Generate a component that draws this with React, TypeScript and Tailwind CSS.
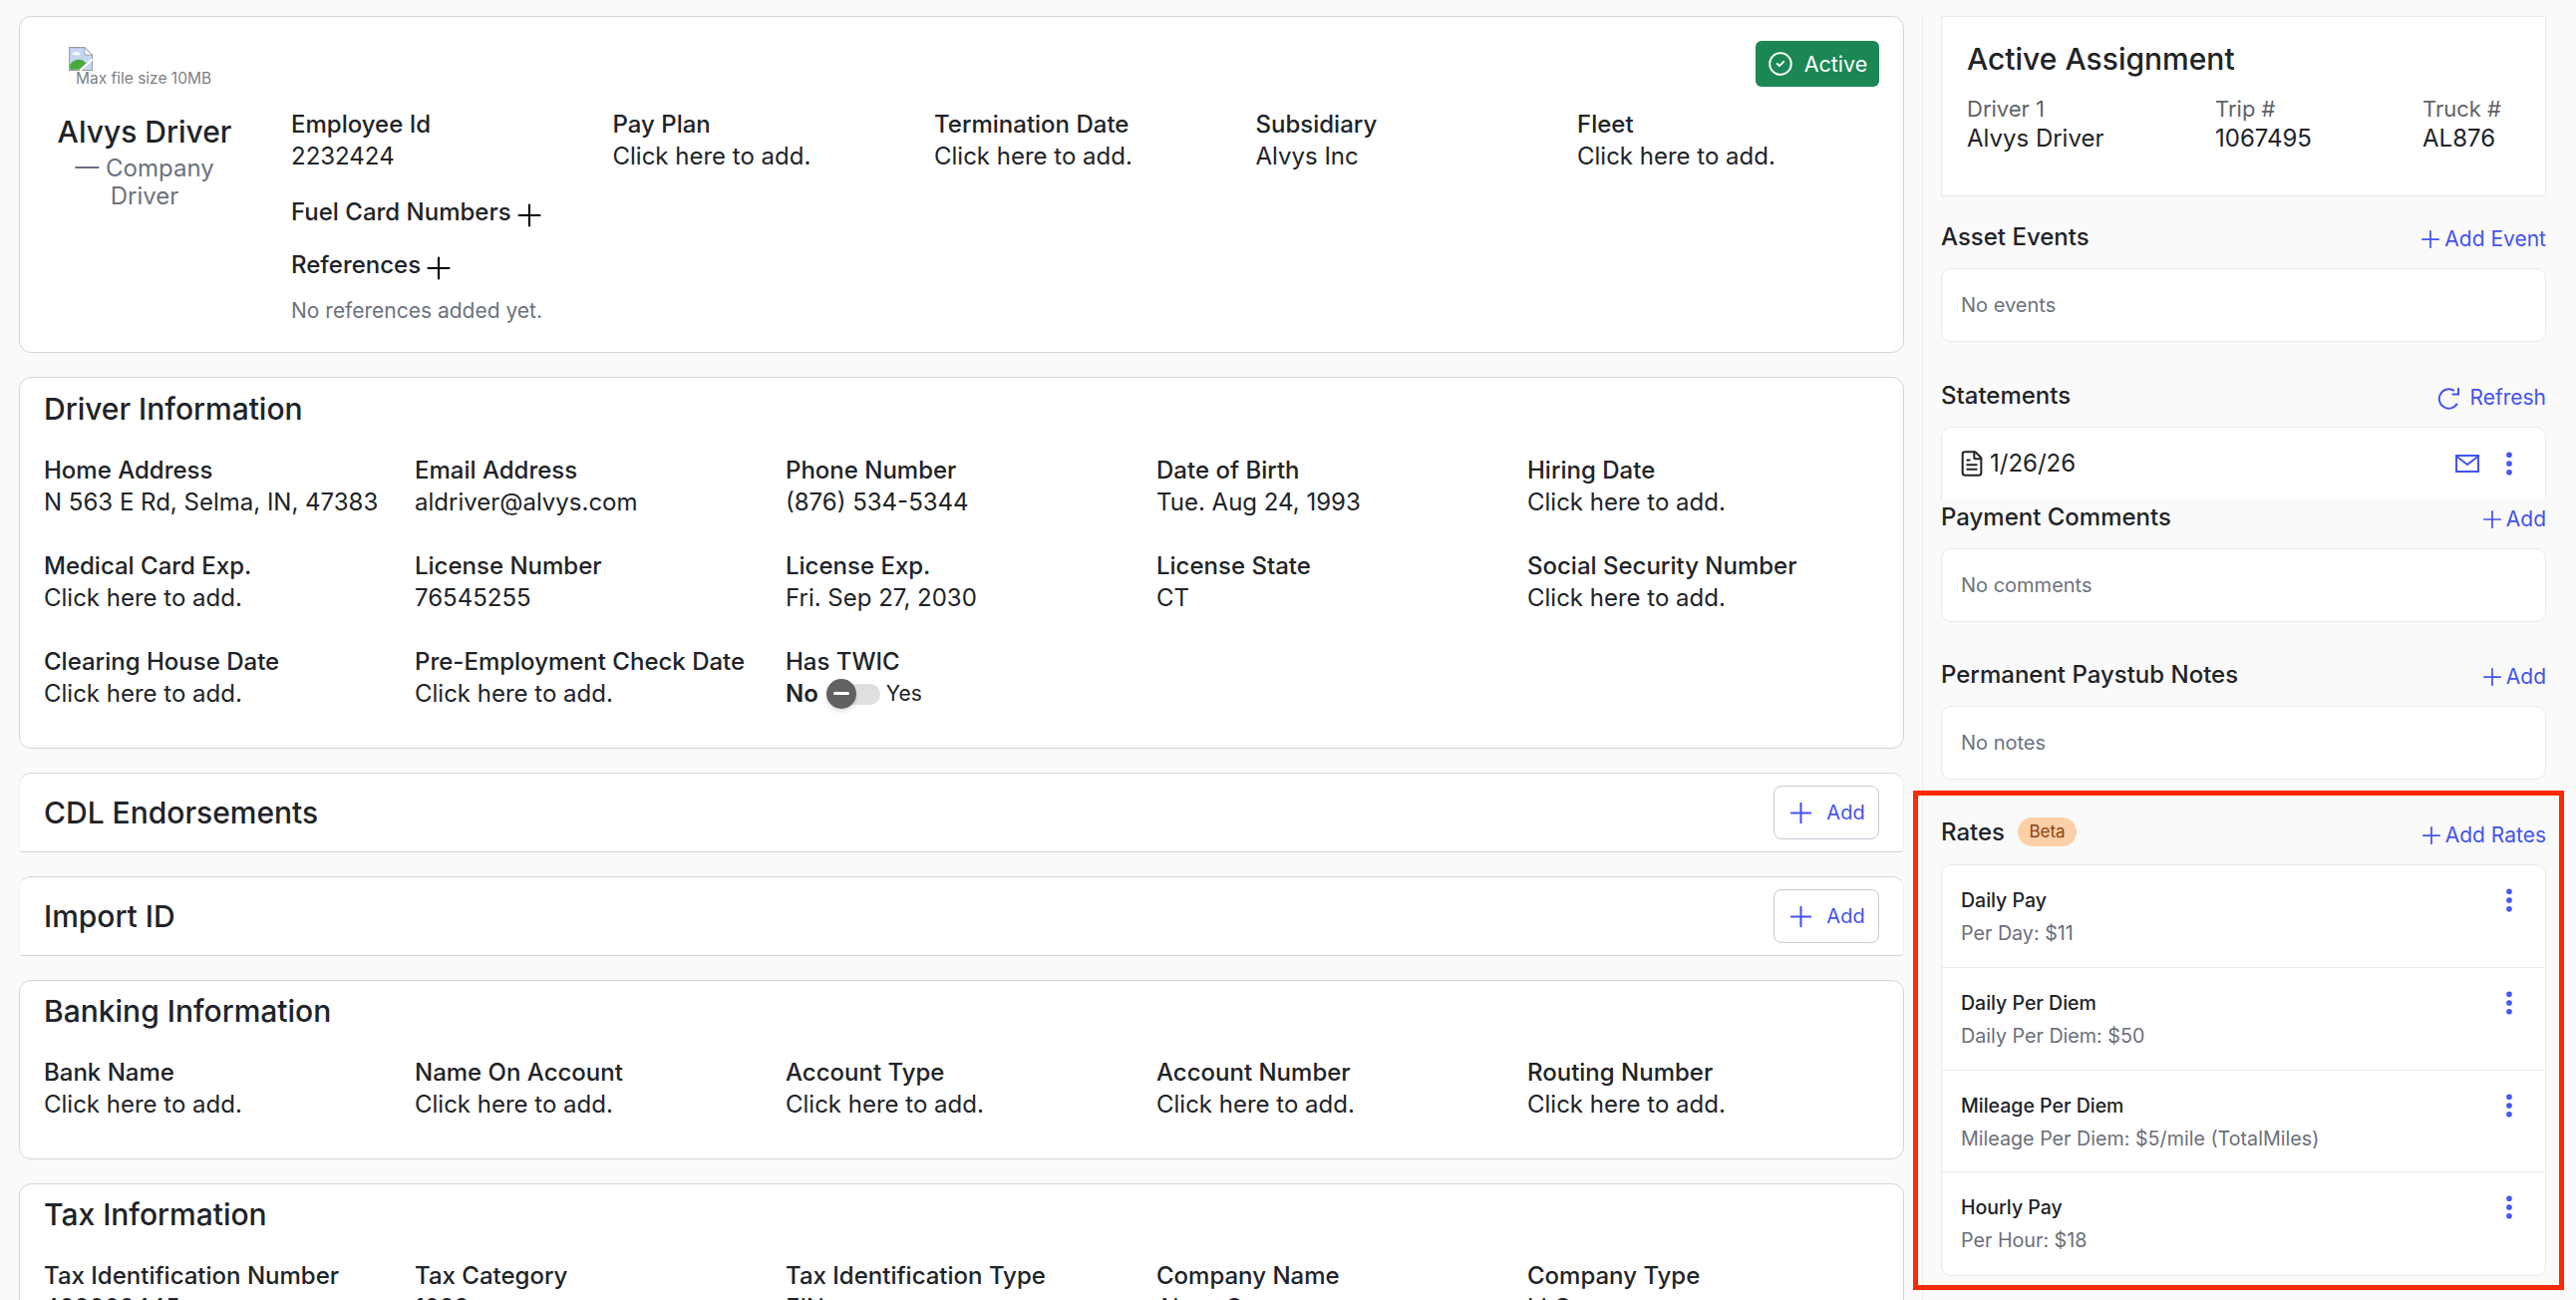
import { CircleCheck, EllipsisVertical, Plus, FileText } from "lucide-react";

const FONT = "font-['Inter','Noto_Sans',sans-serif]";

function Field({ label, value }: { label: string; value: string }) {
  return (
    <div className="text-[24px] leading-[32px] text-[#202327]">
      <div className="whitespace-nowrap font-[450]">{label}</div>
      <div className="whitespace-nowrap">{value}</div>
    </div>
  );
}

function BrokenImage() {
  return (
    <svg width="24" height="24" viewBox="0 0 16 16" className="shrink-0">
      <path d="M0.4 0.4h10.2l5 5v10.2H0.4z" fill="#c5d6f5" stroke="#9c9c9c" strokeWidth="0.7" />
      <path d="M10.6 0.4v5h5z" fill="#fff" stroke="#9c9c9c" strokeWidth="0.6" />
      <ellipse cx="5" cy="4.5" rx="2.4" ry="1" fill="#fff" />
      <path d="M0.8 15.2v-3.4c2.4-3 6-4.2 9-2.4l-5.6 5.8z" fill="#46a838" />
      <path d="M9.6 9.4c1 .6 1.6 1.2 2 1.8l-3.6 4H4.2z" fill="#46a838" />
      <path d="M7.5 15.8L15.8 8.2" stroke="#fff" strokeWidth="1.5" />
    </svg>
  );
}

function RefreshIcon() {
  return (
    <svg width="24" height="24" viewBox="0 0 24 24" fill="none" stroke="currentColor" strokeWidth="2" className="shrink-0">
      <path d="M19.9 17.85A9.7 9.7 0 1 1 17 5" />
      <path d="M21 2v6.5h-6.5" />
    </svg>
  );
}

function MailIcon() {
  return (
    <svg width="28" height="28" viewBox="0 0 28 28" fill="none" stroke="currentColor" strokeWidth="2" className="shrink-0">
      <path d="M3 6h22v16H3z" />
      <path d="M3.5 7L14 15l10.5-8" />
    </svg>
  );
}

function Toggle() {
  return (
    <div className="flex h-[32px] items-center">
      <span className="text-[24px] font-semibold text-[#202327]">No</span>
      <span className="relative ml-[8px] h-[21px] w-[54px] rounded-full bg-[#e0e0e0]">
        <span className="absolute left-0 top-[-5px] flex h-[30px] w-[30px] items-center justify-center rounded-full bg-[#616161] shadow-md">
          <span className="h-[3px] w-[16px] rounded-sm bg-white" />
        </span>
      </span>
      <span className="ml-[6px] text-[21px] text-[#202327]">Yes</span>
    </div>
  );
}

function AddButton() {
  return (
    <button
      type="button"
      className="flex h-[54px] w-[106px] items-center justify-center gap-[9px] rounded-[8px] border border-[#cacad8] bg-white text-[20px] text-[#4353ef]"
    >
      <Plus size={33} strokeWidth={1.5} className="-ml-[3px]" />
      Add
    </button>
  );
}

function PanelHead({ title, action }: { title: React.ReactNode; action: React.ReactNode }) {
  return (
    <div className="flex h-[46px] items-start justify-between text-[#202327]">
      <div className="text-[24px] font-[450] leading-[29px]">{title}</div>
      <div className="mt-[2px]">{action}</div>
    </div>
  );
}

function SidePanel({
  title,
  action,
  empty,
}: {
  title: string;
  action: React.ReactNode;
  empty: string;
}) {
  return (
    <section>
      <PanelHead title={title} action={action} />
      <div className="flex h-[74px] items-center rounded-[10px] border border-[#e8eaef] bg-white px-[19px] text-[20px] text-[#6c737f]">
        {empty}
      </div>
    </section>
  );
}

function AddLink({ label }: { label: string }) {
  return (
    <span className="flex h-[29px] items-center text-[21px] leading-[29px] text-[#4353ef]">
      <Plus size={28} strokeWidth={1.5} />
      {label}
    </span>
  );
}

function Dots() {
  return <EllipsisVertical size={30} strokeWidth={2.5} className="shrink-0 text-[#4353ef]" />;
}

const rates = [
  { name: "Daily Pay", detail: "Per Day: $11" },
  { name: "Daily Per Diem", detail: "Daily Per Diem: $50" },
  { name: "Mileage Per Diem", detail: "Mileage Per Diem: $5/mile (TotalMiles)" },
  { name: "Hourly Pay", detail: "Per Hour: $18" },
];

const driverInfo = [
  ["Home Address", "N 563 E Rd, Selma, IN, 47383"],
  ["Email Address", "aldriver@alvys.com"],
  ["Phone Number", "(876) 534-5344"],
  ["Date of Birth", "Tue. Aug 24, 1993"],
  ["Hiring Date", "Click here to add."],
  ["Medical Card Exp.", "Click here to add."],
  ["License Number", "76545255"],
  ["License Exp.", "Fri. Sep 27, 2030"],
  ["License State", "CT"],
  ["Social Security Number", "Click here to add."],
  ["Clearing House Date", "Click here to add."],
  ["Pre-Employment Check Date", "Click here to add."],
];

const banking = ["Bank Name", "Name On Account", "Account Type", "Account Number", "Routing Number"];

const tax = [
  ["Tax Identification Number", "409000445"],
  ["Tax Category", "1099"],
  ["Tax Identification Type", "EIN"],
  ["Company Name", "Alvys Co"],
  ["Company Type", "LLC"],
];

export default function App() {
  return (
    <div className={`${FONT} relative flex h-[1304px] w-[2584px] overflow-hidden bg-[#fafafa]`}>
      <main className="ml-[19px] mt-[16px] flex w-[1891px] shrink-0 flex-col gap-[24px]">
        <section className="relative h-[338px] shrink-0 rounded-[12px] border border-[#d6d6d6] bg-white">
          <div className="flex">
            <div className="ml-[36px] w-[178px] shrink-0 text-center">
              <div className="mt-[30px] flex flex-col">
                <div className="ml-[13px] text-left">
                  <BrokenImage />
                </div>
                <div className="whitespace-nowrap pl-[20px] text-left text-[15.5px] leading-[16px] text-[#7b7f85]">
                  Max file size 10MB
                </div>
              </div>
              <div className="mt-[25px] whitespace-nowrap text-[30px] font-[450] leading-[40px] text-[#202327]">Alvys Driver</div>
              <div className="mt-[3px] text-[24px] leading-[28px] text-[#6b7280]">— Company Driver</div>
            </div>
            <div className="ml-[58px] pt-[92px]">
              <div className="grid grid-cols-[repeat(5,322.5px)]">
                <Field label="Employee Id" value="2232424" />
                <Field label="Pay Plan" value="Click here to add." />
                <Field label="Termination Date" value="Click here to add." />
                <Field label="Subsidiary" value="Alvys Inc" />
                <Field label="Fleet" value="Click here to add." />
              </div>
              <div className="mt-[24px] flex h-[32px] items-center text-[24px] font-[450] leading-[32px] text-[#202327]">
                Fuel Card Numbers <Plus size={36} strokeWidth={1.4} className="-my-[2px] mt-[3px] text-black" />
              </div>
              <div className="mt-[21px] flex h-[32px] items-center text-[24px] font-[450] leading-[32px] text-[#202327]">
                References <Plus size={36} strokeWidth={1.4} className="-my-[2px] mt-[3px] text-black" />
              </div>
              <div className="mt-[15px] text-[21px] leading-[30px] text-[#6b7280]">No references added yet.</div>
            </div>
          </div>
          <div className="absolute right-[24px] top-[24px] flex h-[46px] w-[124px] items-center justify-center gap-[11px] rounded-[6px] bg-[#1a8754] text-[21.5px] text-white">
            <CircleCheck size={26} strokeWidth={1.75} />
            Active
          </div>
        </section>

        <section className="h-[373px] shrink-0 rounded-[12px] border border-[#d6d6d6] bg-white px-[24px] pt-[11px]">
          <h2 className="text-[30px] font-[450] leading-[40px] text-[#202327]">Driver Information</h2>
          <div className="mt-[26px] grid grid-cols-[repeat(5,372px)] gap-y-[32px]">
            {driverInfo.map(([label, value]) => (
              <Field key={label} label={label} value={value} />
            ))}
            <div className="text-[24px] leading-[32px] text-[#202327]">
              <div className="font-[450]">Has TWIC</div>
              <Toggle />
            </div>
          </div>
        </section>

        <section className="flex h-[80px] shrink-0 items-center justify-between rounded-t-[12px] rounded-b-[4px] border border-[#d6d6d6] border-x-[#f1f1f1] bg-white pl-[24px] pr-[24px]">
          <h2 className="text-[30px] font-[450] text-[#202327]">CDL Endorsements</h2>
          <AddButton />
        </section>

        <section className="flex h-[80px] shrink-0 items-center justify-between rounded-t-[12px] rounded-b-[4px] border border-[#d6d6d6] border-x-[#f1f1f1] bg-white pl-[24px] pr-[24px]">
          <h2 className="text-[30px] font-[450] text-[#202327]">Import ID</h2>
          <AddButton />
        </section>

        <section className="h-[180px] shrink-0 rounded-[12px] border border-[#d6d6d6] bg-white px-[24px] pt-[10px]">
          <h2 className="text-[30px] font-[450] leading-[40px] text-[#202327]">Banking Information</h2>
          <div className="mt-[26px] grid grid-cols-[repeat(5,372px)]">
            {banking.map((label) => (
              <Field key={label} label={label} value="Click here to add." />
            ))}
          </div>
        </section>

        <section className="h-[200px] shrink-0 rounded-[12px] border border-[#d6d6d6] bg-white px-[24px] pt-[10px]">
          <h2 className="text-[30px] font-[450] leading-[40px] text-[#202327]">Tax Information</h2>
          <div className="mt-[26px] grid grid-cols-[repeat(5,372px)]">
            {tax.map(([label, value]) => (
              <Field key={label} label={label} value={value} />
            ))}
          </div>
        </section>
      </main>

      <aside className="ml-[18px] mt-[16px] w-[626px] shrink-0 self-stretch border-l border-[#ececec] pl-[18px]">
        <div className="h-[181px] w-[607px] border border-[#e8eaef] bg-white px-[25px] pt-[22px]">
          <h2 className="text-[30px] font-[450] leading-[40px] text-[#202327]">Active Assignment</h2>
          <div className="mt-[15px] flex text-[24px] leading-[30px]">
            <div className="w-[249px]">
              <div className="text-[22px] text-[#5f6368]">Driver 1</div>
              <div className="text-[#202327]">Alvys Driver</div>
            </div>
            <div className="w-[208px]">
              <div className="text-[22px] text-[#5f6368]">Trip #</div>
              <div className="text-[#202327]">1067495</div>
            </div>
            <div>
              <div className="text-[22px] text-[#5f6368]">Truck #</div>
              <div className="text-[#202327]">AL876</div>
            </div>
          </div>
        </div>

        <div className="w-[607px]">
          <div className="mt-[26px]">
            <SidePanel title="Asset Events" action={<AddLink label="Add Event" />} empty="No events" />
          </div>

          <div className="mt-[39px]">
            <PanelHead
              title="Statements"
              action={
                <span className="flex h-[29px] items-center gap-[8px] text-[21px] leading-[29px] text-[#4353ef]">
                  <RefreshIcon />
                  Refresh
                </span>
              }
            />
            <div className="flex h-[73px] items-center justify-between rounded-t-[10px] border border-b-0 border-[#e8eaef] bg-white pl-[16px] pr-[21px]">
              <div className="flex items-center gap-[4px] text-[24px] text-[#202327]">
                <FileText size={28} strokeWidth={1.75} />
                1/26/26
              </div>
              <div className="flex items-center gap-[13px] text-[#4353ef]">
                <MailIcon />
                <Dots />
              </div>
            </div>
          </div>

          <div className="mt-[3px]">
            <SidePanel title="Payment Comments" action={<AddLink label="Add" />} empty="No comments" />
          </div>

          <div className="mt-[38px]">
            <SidePanel title="Permanent Paystub Notes" action={<AddLink label="Add" />} empty="No notes" />
          </div>

          <div className="mt-[38px]">
            <div className="flex h-[47px] items-start justify-between">
              <div className="flex items-center gap-[13px] text-[24px] font-[450] leading-[29px] text-[#202327]">
                Rates
                <span className="flex h-[29px] w-[59px] items-center justify-center rounded-full bg-[#fdcfa8] text-[17px] font-normal text-[#8a4310]">
                  Beta
                </span>
              </div>
              <div className="mt-[3px]">
                <AddLink label="Add Rates" />
              </div>
            </div>
            <div className="rounded-[10px] border border-[#e8eaef] bg-white">
              {rates.map((rate) => (
                <div
                  key={rate.name}
                  className="flex h-[102.75px] items-start justify-between border-b border-[#e8eaef] pl-[19px] pr-[21px] pt-[21px] last:border-b-0"
                >
                  <div>
                    <div className="text-[19.5px] font-[550] leading-[28px] text-[#202327]">{rate.name}</div>
                    <div className="mt-[5px] text-[19.7px] leading-[28px] text-[#6b6f7b]">{rate.detail}</div>
                  </div>
                  <div className="-mt-[1px]">
                    <Dots />
                  </div>
                </div>
              ))}
            </div>
          </div>
        </div>
      </aside>

      {/* review annotation around the rates block */}
      <div className="pointer-events-none absolute left-[1919px] top-[793px] h-[501px] w-[653px] border-[5px] border-[#ff2a00]" />
    </div>
  );
}
